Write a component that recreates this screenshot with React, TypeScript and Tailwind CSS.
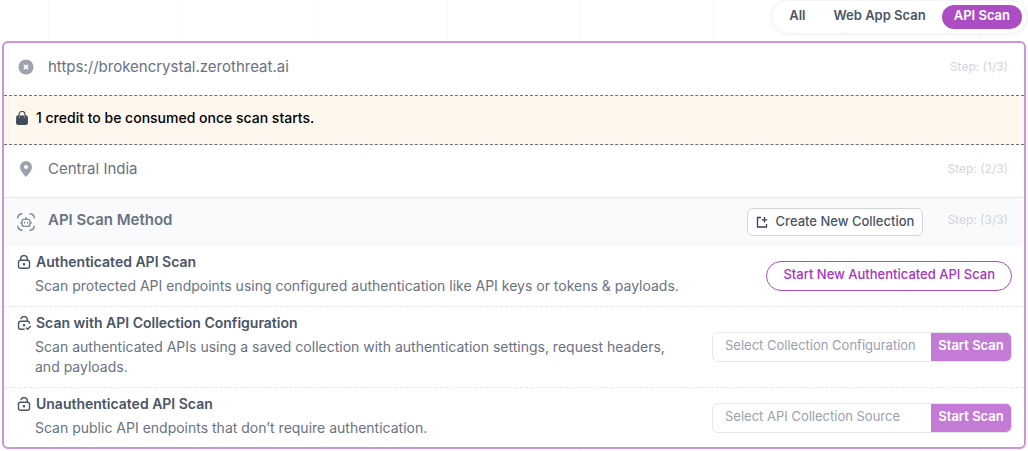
import { useState } from 'react';

interface ScanOptionProps {
  icon: React.ReactNode;
  title: string;
  description: string;
  children: React.ReactNode;
}

interface SourcePickerProps {
  label: string;
}

const TABS = ['All', 'Web App Scan', 'API Scan'];

const ClearIcon = () => (
  <svg viewBox="0 0 16 16" className="w-4 h-4" aria-hidden="true">
    <circle cx="8" cy="8" r="7.6" fill="#9ca3af" />
    <path d="M5.900 5.900l4.200 4.200M10.100 5.900l-4.200 4.200" stroke="#fff" strokeWidth="1.7" fill="none" />
  </svg>
);

const BagIcon = () => (
  <svg viewBox="0 0 12 14" className="w-3 h-3.5" aria-hidden="true">
    <path d="M3 6V3.500a3 3 0 0 1 6 0V6" fill="none" stroke="#414b5a" strokeWidth="1.1" />
    <path
      d="M1.800 4.500h8.400c.9 0 1.500.5 1.600 1.300l.2 5.800c0 1.500-.8 2.400-2.200 2.400H2.200C.8 14 0 13.100 0 11.600l.2-5.800c.1-.8.7-1.300 1.600-1.300z"
      fill="#414b5a"
    />
    <circle cx="3.300" cy="6" r=".6" fill="#fff6ed" />
    <circle cx="8.700" cy="6" r=".6" fill="#fff6ed" />
  </svg>
);

const PinIcon = () => (
  <svg viewBox="0 0 12 16" className="w-3 h-4" aria-hidden="true">
    <path
      d="M6 0a6 6 0 0 0-6 6c0 4.200 4.300 8 6 10 1.700-2 6-5.800 6-10a6 6 0 0 0-6-6zm0 8a2 2 0 1 1 0-4 2 2 0 0 1 0 4z"
      fill="#9ca3af"
    />
  </svg>
);

const ScanBotIcon = () => (
  <svg
    viewBox="0 0 18 18"
    className="w-[18px] h-[18px]"
    fill="none"
    stroke="#6b7280"
    strokeWidth="1.2"
    strokeLinecap="round"
    aria-hidden="true"
  >
    <path d="M.8 5C.8 2.500 2.500.8 5 .8M13 .8c2.500 0 4.200 1.700 4.200 4.200M17.200 13c0 2.500-1.700 4.200-4.200 4.200M5 17.200C2.500 17.200.8 15.500.8 13" />
    <rect x="5" y="6.300" width="8" height="6.900" rx="2" strokeWidth="1.100" />
    <path d="M9 6.200V4.600M7.500 9.200v.8M10.500 9.200v.8" strokeWidth="1.100" />
    <path d="M3.900 9.100v1.500M14.100 9.100v1.500" strokeWidth=".8" />
  </svg>
);

const LockIcon = ({ variant }: { variant: 'locked' | 'checked' | 'open' }) => (
  <svg
    viewBox="0 0 14 14"
    className="w-3.5 h-3.5"
    fill="none"
    stroke="#4b5563"
    strokeWidth="1.4"
    strokeLinecap="round"
    strokeLinejoin="round"
    aria-hidden="true"
  >
    {variant === 'locked' && <path d="M3.700 5V3.900a3.300 3.300 0 0 1 6.600 0V5" />}
    {variant !== 'locked' && <path d="M3.900 2.700a3.300 3.300 0 0 1 6.400 1.200V5" />}
    {variant === 'checked' ? (
      <path d="M7.200 13.300H3.600c-1.500 0-2.100-.8-2.100-2.200V7.400c0-1.500.7-2.200 2.100-2.200h6.800c1.300 0 2 .6 2.100 1.900M9.400 12l1.300 1.300 2.600-2.800" />
    ) : (
      <rect x="1.500" y="5.200" width="11" height="8.100" rx="2" />
    )}
    <circle cx="7" cy="9.300" r=".6" fill="#4b5563" />
  </svg>
);

const AddCollectionIcon = () => (
  <svg viewBox="0 0 12 12" className="w-3 h-3" fill="none" stroke="#374151" strokeWidth="1.3" aria-hidden="true">
    <path d="M5 1.500H1.500v9.500h9V8" />
    <path d="M8.500 1v5.600M5.700 3.800h5.600" />
  </svg>
);

const Step = ({ current }: { current: number }) => (
  <span className="shrink-0 text-xs leading-6 text-gray-300">Step: ({current}/3)</span>
);

const ScanOption: React.FC<ScanOptionProps> = ({ icon, title, description, children }) => (
  <section className="group flex items-center justify-between gap-8 px-3 border-b border-dashed border-gray-200 last:border-b-0">
    <div className="pt-1 pb-2.5 group-last:pb-[9px]">
      <h3 className="flex items-center gap-1 text-sm leading-6 font-semibold text-gray-600">
        <span className="w-4 flex justify-center">{icon}</span>
        {title}
      </h3>
      <p className="mt-0.5 ml-[19px] text-sm leading-5 text-gray-500">{description}</p>
    </div>
    {children}
  </section>
);

const SourcePicker: React.FC<SourcePickerProps> = ({ label }) => (
  <form
    onSubmit={(e) => e.preventDefault()}
    className="shrink-0 flex w-[300px] h-[30px] rounded-md border border-gray-200 overflow-hidden"
  >
    <input
      type="text"
      aria-label={label}
      placeholder={label}
      className="flex-1 min-w-0 px-3 pb-0.5 text-[13px] text-gray-600 placeholder-gray-400 outline-none"
    />
    <button
      type="submit"
      className="w-20 pb-0.5 bg-[#c47bd5] text-white text-[13px] font-semibold whitespace-nowrap"
    >
      Start Scan
    </button>
  </form>
);

const App: React.FC = () => {
  const [tab, setTab] = useState('API Scan');

  return (
    <div className="px-0.5 pt-px pb-0.5 font-['Inter',sans-serif] bg-[repeating-linear-gradient(90deg,transparent_0_48px,#f9f9f9_48px_49px,transparent_49px_133px)]">
      <nav className="ml-auto w-fit h-8 flex items-center gap-1 px-1 rounded-full bg-white shadow-[0_0_6px_rgba(0,0,0,0.1)]">
        {TABS.map((name) => (
          <button
            key={name}
            type="button"
            onClick={() => setTab(name)}
            className={`h-6 px-3 pb-0.5 rounded-full text-[13px] font-semibold ${
              tab === name ? 'bg-[#ad4dc4] text-white' : 'text-gray-600'
            }`}
          >
            {name}
          </button>
        ))}
      </nav>

      <main className="mt-2 rounded-md border-2 border-[#cd93dc] bg-white overflow-hidden">
        <div className="flex gap-3 pl-3 pr-4 pt-3 pb-4 border-b border-dashed border-gray-500">
          <button type="button" aria-label="Clear target" className="w-5 h-6 flex items-center justify-center">
            <ClearIcon />
          </button>
          <span className="flex-1 text-[15px] leading-6 text-gray-500">https://brokencrystal.zerothreat.ai</span>
          <Step current={1} />
        </div>

        <div className="flex items-center gap-2 px-3 pt-2.5 pb-3.5 bg-[#fff6ed] border-b border-dashed border-gray-500">
          <BagIcon />
          <p className="text-sm leading-6 font-medium text-black">1 credit to be consumed once scan starts.</p>
        </div>

        <div className="flex gap-3 pl-3 pr-4 pt-3 pb-4 border-b border-gray-200">
          <span className="w-5 h-6 flex items-center justify-center">
            <PinIcon />
          </span>
          <span className="flex-1 text-[15px] leading-6 text-gray-500">Central India</span>
          <Step current={2} />
        </div>

        <div className="flex gap-3 pl-3 pr-4 py-2.5 bg-gray-50">
          <span className="w-5 h-7 flex items-center justify-center">
            <ScanBotIcon />
          </span>
          <h2 className="flex-1 text-[15px] leading-6 font-semibold text-gray-500">API Scan Method</h2>
          <div className="flex gap-6">
            <button
              type="button"
              className="h-7 flex items-center gap-2 px-2 rounded-md border border-gray-300 bg-white text-[13px] font-medium text-gray-600"
            >
              <AddCollectionIcon />
              Create New Collection
            </button>
            <Step current={3} />
          </div>
        </div>

        <ScanOption
          icon={<LockIcon variant="locked" />}
          title="Authenticated API Scan"
          description="Scan protected API endpoints using configured authentication like API keys or tokens & payloads."
        >
          <button
            type="button"
            className="shrink-0 h-[30px] px-4 pb-0.5 rounded-full border border-[#ad4dc4] text-[13px] font-medium text-[#a534bf]"
          >
            Start New Authenticated API Scan
          </button>
        </ScanOption>
        <ScanOption
          icon={<LockIcon variant="checked" />}
          title="Scan with API Collection Configuration"
          description="Scan authenticated APIs using a saved collection with authentication settings, request headers, and payloads."
        >
          <SourcePicker label="Select Collection Configuration" />
        </ScanOption>
        <ScanOption
          icon={<LockIcon variant="open" />}
          title="Unauthenticated API Scan"
          description="Scan public API endpoints that don’t require authentication."
        >
          <SourcePicker label="Select API Collection Source" />
        </ScanOption>
      </main>
    </div>
  );
};

export default App;
